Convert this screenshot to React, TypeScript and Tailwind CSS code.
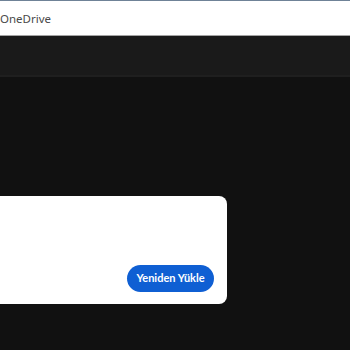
export default function App() {
  return (
    <div className="w-[350px] h-[350px] overflow-hidden bg-[#111111] flex flex-col">
      {/* Title bar */}
      <div className="h-[36px] shrink-0 bg-white border-t border-t-[#6f8297] border-b border-b-[#a3a3a3] flex items-center pt-[2px]">
        <span className="text-[11.5px] text-[#4a4a4a] font-['Noto_Sans',sans-serif] leading-none">
          OneDrive
        </span>
      </div>

      {/* Toolbar */}
      <div className="h-[41px] shrink-0 bg-[#1a1a1a] border-b-2 border-b-[#1f1f1f]" />

      {/* Dialog */}
      <div className="pt-[119px]">
        <div className="-ml-[40px] w-[267px] h-[108px] bg-white rounded-[8px] flex items-end justify-end pr-[13px] pb-[12px]">
          <button className="h-[27px] w-[87px] rounded-full bg-[#0f5fd3] text-white text-[11px] font-bold font-['Lato',sans-serif] flex items-center justify-center">
            Yeniden Yükle
          </button>
        </div>
      </div>
    </div>
  );
}
